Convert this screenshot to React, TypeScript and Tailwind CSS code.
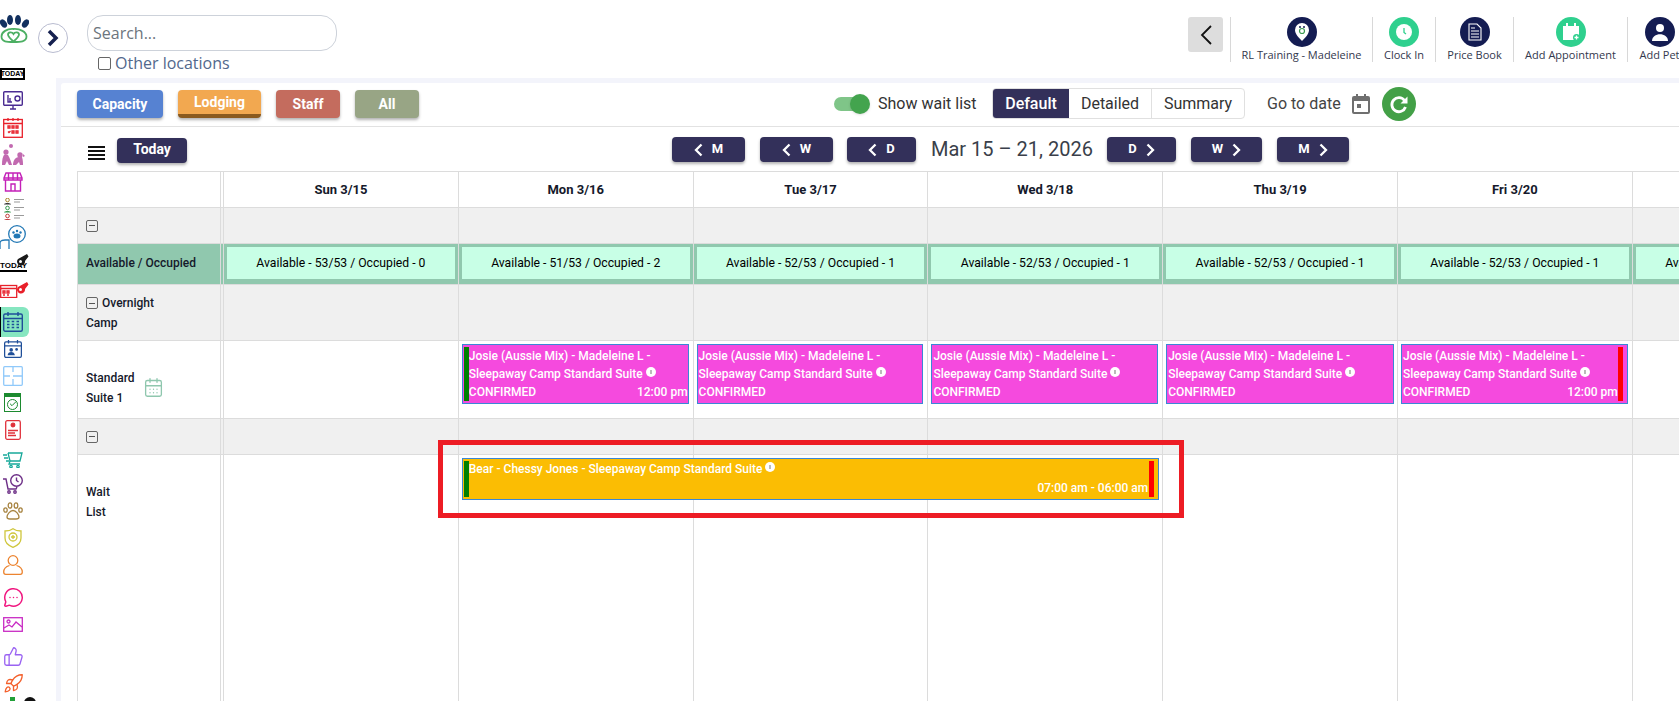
import React from "react";
import { CalendarDays, Check, MessageCircleMore, Rocket, ThumbsUp } from "lucide-react";

const ROW = "grid grid-cols-[146px_repeat(7,234.8px)] border-b border-[#dcdcdc]";
const days = ["Sun 3/15", "Mon 3/16", "Tue 3/17", "Wed 3/18", "Thu 3/19", "Fri 3/20", "Sat 3/21"];
const avail = [
  "Available - 53/53 / Occupied - 0",
  "Available - 51/53 / Occupied - 2",
  "Available - 52/53 / Occupied - 1",
  "Available - 52/53 / Occupied - 1",
  "Available - 52/53 / Occupied - 1",
  "Available - 52/53 / Occupied - 1",
  "Available - 52/53 / Occupied - 1",
];

const Logo = () => (
  <svg viewBox="0 0 29 28" className="h-[28px] w-[29px]">
    <ellipse cx="3.500" cy="8.500" rx="3" ry="4.500" fill="#12305f" transform="rotate(-35 3.500 8.500)" />
    <ellipse cx="10" cy="5" rx="3" ry="5" fill="#12305f" />
    <ellipse cx="18" cy="5" rx="3" ry="5" fill="#12305f" />
    <ellipse cx="25.500" cy="8.500" rx="3" ry="4.500" fill="#12305f" transform="rotate(35 25.500 8.500)" />
    <path
      d="M13.500 27C7 27 1.500 27 1.500 21.500 1.500 17 7 13.500 13.500 14 20 13.500 26.500 17 26.500 21.500 26.500 27 20 27 13.500 27z"
      fill="none"
      stroke="#4caf63"
      strokeWidth="1.800"
    />
    <path
      d="M13.500 26.500C10 23.500 8 21.500 8 19.500c0-2.500 4-3 5.500-.5 1.500-2.500 5.500-2 5.500.5 0 2-2 4-5.500 7z"
      fill="none"
      stroke="#4caf63"
      strokeWidth="1.800"
    />
  </svg>
);

const Monitor = () => (
  <svg viewBox="0 0 20 20" className="h-5 w-5" fill="none" stroke="#4b2c92" strokeWidth="1.400">
    <rect x="0.700" y="0.700" width="18.600" height="13.600" rx="1" />
    <path d="M5 4v7h4M7 7v4M12 7.500a2.500 2.500 0 1 0 5 0 2.500 2.500 0 1 0-5 0M10 14.500v3M7 18h6" />
  </svg>
);

const RedCalendar = () => (
  <svg viewBox="0 0 20 20" className="h-5 w-5" fill="none" stroke="#e8202a" strokeWidth="1.300">
    <rect x="0.700" y="1.500" width="18.600" height="17.800" />
    <path d="M1 5.500h18M5 0v3M10 0v3M15 0v3" />
    <path d="M5 8h2v2H5zM9 8h2v2H9zM13 8h2v2h-2zM9 13h2v2H9zM13 13h2v2h-2zM5 13.500l1 1 1.500-1.500" />
  </svg>
);

const Dogs = () => (
  <svg viewBox="0 0 24 22" className="h-[22px] w-[24px]" fill="#c26ab0">
    <circle cx="10" cy="2" r="2" />
    <circle cx="5" cy="8" r="2.600" />
    <path d="M1 21c0-5 .5-9 3-11l3 1c2 3 3 7 4 10H8l-2-4-2 4z" />
    <circle cx="19" cy="11" r="2.700" />
    <path d="M22 10l2 2-2 1zM12 21c0-4 2-8 6-8h3c1 3 1 6 1 8h-3l-1-3-3 3z" />
  </svg>
);

const Store = () => (
  <svg viewBox="0 0 20 20" className="h-5 w-5" fill="none" stroke="#c421b8" strokeWidth="1.400">
    <path d="M3 1h14l2 5v2H1V6zM1 6h18M5.500 1v7M10 1v7M14.500 1v7M2.500 8v11h15V8M8 19v-7h4v7" />
  </svg>
);

const People = () => (
  <svg viewBox="0 0 22 22" className="h-[22px] w-[22px]">
    {[0, 8, 16].map((y, i) => (
      <g key={y}>
        <circle cx="4.500" cy={y + 2} r="1.800" fill="none" stroke={["#a8862b", "#3d9b53", "#c23d3d"][i]} strokeWidth="1" />
        <path d={`M1 ${y + 6.500}c0-2 7-2 7 0z`} fill={["#3a3a3a", "#3d9b53", "#c23d3d"][i]} />
        <path d={`M11 ${y + 1.500}h10M11 ${y + 4}h6`} stroke="#9a9a9a" strokeWidth="1.200" />
      </g>
    ))}
  </svg>
);

const PawCar = () => (
  <svg viewBox="0 0 26 25" className="h-[25px] w-[26px]" fill="none">
    <circle cx="17" cy="9" r="8.300" stroke="#2278b5" strokeWidth="1.300" />
    <ellipse cx="17" cy="11" rx="3.500" ry="2.500" fill="#2278b5" />
    <circle cx="13.500" cy="7.500" r="1.200" fill="#2278b5" />
    <circle cx="17" cy="6" r="1.200" fill="#2278b5" />
    <circle cx="20.500" cy="7.500" r="1.200" fill="#2278b5" />
    <path d="M0 24v-6c0-2 2-3 5-3h4v9" stroke="#2278b5" strokeWidth="1.300" />
  </svg>
);

const Whistle = ({ color, label }: { color: string; label: boolean }) => (
  <div className="flex h-full w-[29px] items-end overflow-hidden">
    <div className="relative h-full w-full">
      {label ? (
        <span className="absolute bottom-0 left-0 border-b-2 border-black font-['Liberation_Sans',sans-serif] text-[8px] leading-[9px] font-bold text-black">
          TODAY
        </span>
      ) : (
        <svg viewBox="0 0 18 14" className="absolute bottom-0 left-0 h-[14px] w-[18px]" fill="none" stroke={color} strokeWidth="1.300">
          <rect x="0.700" y="1.500" width="16" height="12" />
          <path d="M1 4.500h15M3 7h2v2H3zM7 7h2v2H7zM3 11h2M7 11h2" />
        </svg>
      )}
      <svg viewBox="0 0 14 14" className="absolute top-0 right-0 h-[14px] w-[14px]">
        <path d="M3 6l9-5 1.500 2.500L10 8a4 4 0 1 1-7-2z" fill={color} />
        <circle cx="5.500" cy="8.500" r="1.500" fill="#fff" />
      </svg>
    </div>
  </div>
);

const BlueCalendar = ({ people }: { people?: boolean }) => (
  <svg viewBox="0 0 20 20" className="h-full w-5" fill="none" stroke="#1f4f99" strokeWidth="1.400">
    <rect x="0.700" y="2" width="18.600" height="17.300" rx="1.500" />
    <path d="M1 6.500h18M5 0v4M15 0v4" />
    {people ? (
      <g fill="#1f4f99" stroke="none">
        <circle cx="8" cy="11" r="2" />
        <path d="M4 17c0-5 8-5 8 0z" />
        <circle cx="14" cy="10.500" r="1.500" />
      </g>
    ) : (
      <path d="M4 9.500h2.500M8.700 9.500h2.500M13.500 9.500H16M4 12.500h2.500M8.700 12.500h2.500M13.500 12.500H16M4 15.500h2.500M8.700 15.500h2.500M13.500 15.500H16" strokeWidth="1.600" />
    )}
  </svg>
);

const WindowGrid = () => (
  <svg viewBox="0 0 20 20" className="h-5 w-5" fill="none" stroke="#90c9fa" strokeWidth="1.300">
    <rect x="0.700" y="0.700" width="18.600" height="18.600" rx="1" />
    <path d="M1 10h6M10 10h9M10 1v5M10 13v6" />
  </svg>
);

const GreenCheck = () => (
  <div className="relative flex h-full w-[17px] items-center justify-center border border-[#1c8a2f]">
    <div className="absolute top-0 h-[3px] w-full bg-[#1c8a2f]" />
    <div className="mt-[3px] flex h-[11px] w-[11px] items-center justify-center rounded-full border border-[#1c8a2f]">
      <Check size={8} color="#1c8a2f" strokeWidth={3} />
    </div>
  </div>
);

const RedDoc = () => (
  <svg viewBox="0 0 16 20" className="h-5 w-4" fill="none" stroke="#e0313b" strokeWidth="1.300">
    <rect x="0.700" y="0.700" width="14.600" height="18.600" rx="1.500" />
    <circle cx="8" cy="5" r="1.800" fill="#e0313b" />
    <path d="M3 10.500h10M3 13h7M3 15.500h8" />
  </svg>
);

const Cart = () => (
  <svg viewBox="0 0 20 16" className="h-4 w-5" fill="none" stroke="#18a99a" strokeWidth="1.300">
    <path d="M5 1h14l-2 8H7L5 1M0 3h4M1 6h4M3 9h3M7 9l-1 3h11" />
    <circle cx="8" cy="14.500" r="1.200" />
    <circle cx="15" cy="14.500" r="1.200" />
  </svg>
);

const CartClock = () => (
  <svg viewBox="0 0 20 20" className="h-5 w-5" fill="none" stroke="#6d2f87" strokeWidth="1.400">
    <circle cx="13.500" cy="6.500" r="5.800" />
    <path d="M13.500 3.500v3l2 1.500M0 5h3l2 10h8l1-2" />
    <circle cx="6" cy="18" r="1.200" />
    <circle cx="12" cy="18" r="1.200" />
  </svg>
);

const PawOutline = () => (
  <svg viewBox="0 0 20 18" className="h-[18px] w-5" fill="none" stroke="#a88543" strokeWidth="1.300">
    <ellipse cx="2.500" cy="8" rx="1.700" ry="2.200" />
    <ellipse cx="7" cy="3.500" rx="1.800" ry="2.700" />
    <ellipse cx="13" cy="3.500" rx="1.800" ry="2.700" />
    <ellipse cx="17.500" cy="8" rx="1.700" ry="2.200" />
    <path d="M10 8.500c-3 0-6 4-6 6.500 0 2 2 2 3 2h6c1 0 3 0 3-2 0-2.500-3-6.500-6-6.500z" />
  </svg>
);

const Shield = () => (
  <svg viewBox="0 0 18 20" className="h-5 w-[18px]" fill="none" stroke="#cfc63c" strokeWidth="1.300">
    <path d="M9 .700c2 1.500 5 2.300 8 2.300v7c0 4-3 7.500-8 9.300-5-1.800-8-5.300-8-9.300V3c3 0 6-.8 8-2.300z" />
    <circle cx="9" cy="9" r="4" />
    <path d="M9 7v4M7 9h4" />
  </svg>
);

const Person = () => (
  <svg viewBox="0 0 20 20" className="h-5 w-5" fill="none" stroke="#ec8430" strokeWidth="1.300">
    <circle cx="10" cy="5.500" r="4.800" />
    <path d="M6.500 10.500C3 11.500.7 13.500.7 17c0 1.500 1 2.300 2 2.300h14.600c1 0 2-.8 2-2.300 0-3.500-2.300-5.500-5.800-6.500" />
  </svg>
);

const Picture = () => (
  <svg viewBox="0 0 20 15" className="h-[15px] w-5" fill="none" stroke="#c92cc4" strokeWidth="1.300">
    <rect x="0.700" y="0.700" width="18.600" height="13.600" />
    <circle cx="5.500" cy="4.500" r="1.500" />
    <path d="M1 11l5-3 3 2 4-5 6 5" />
  </svg>
);

const Slot = ({ className, children }: { className: string; children?: React.ReactNode }) => (
  <div className={`flex items-center pl-[3px] ${className}`}>{children}</div>
);

const Sidebar = () => (
  <div className="h-[701px] w-[38px] shrink-0 overflow-hidden pt-[15px]">
    <div className="h-[28px]">
      <Logo />
    </div>
    <div className="mt-[25px] flex h-[12px] w-[25px] items-center justify-center border-2 border-black font-['Liberation_Sans',sans-serif] text-[7px] font-bold text-black">
      TODAY
    </div>
    <Slot className="mt-[11px] h-[20px]"><Monitor /></Slot>
    <Slot className="mt-[7px] h-[20px]"><RedCalendar /></Slot>
    <div className="mt-[6px] h-[22px] pl-[1px]"><Dogs /></div>
    <Slot className="mt-[6px] h-[20px]"><Store /></Slot>
    <Slot className="mt-[6px] h-[22px]"><People /></Slot>
    <div className="mt-[5px] h-[25px]"><PawCar /></div>
    <div className="mt-[3px] h-[19px]"><Whistle color="#1a1a1a" label /></div>
    <div className="mt-[9px] h-[17px]"><Whistle color="#e8202a" label={false} /></div>
    <div className="mt-[9px] flex h-[30px] w-[29px] items-center rounded-r-[6px] border-l border-black bg-[#86e6c0] pl-[2px]">
      <div className="h-[20px] w-[20px]"><BlueCalendar /></div>
    </div>
    <Slot className="mt-[3px] h-[18px]"><BlueCalendar people /></Slot>
    <Slot className="mt-[8px] h-[20px]"><WindowGrid /></Slot>
    <div className="mt-[7px] ml-[4px] h-[19px]"><GreenCheck /></div>
    <div className="mt-[8px] ml-[5px] h-[20px]"><RedDoc /></div>
    <Slot className="mt-[10px] h-[20px]"><Cart /></Slot>
    <Slot className="mt-[4px] h-[20px]"><CartClock /></Slot>
    <Slot className="mt-[8px] h-[18px]"><PawOutline /></Slot>
    <div className="mt-[8px] ml-[4px] h-[20px]"><Shield /></div>
    <Slot className="mt-[7px] h-[20px]"><Person /></Slot>
    <Slot className="mt-[12px] h-[20px]"><MessageCircleMore size={21} color="#f0167f" strokeWidth={1.700} /></Slot>
    <Slot className="mt-[10px] h-[14px]"><Picture /></Slot>
    <Slot className="mt-[15px] h-[20px]"><ThumbsUp size={21} color="#9a63f2" strokeWidth={1.500} /></Slot>
    <Slot className="mt-[7px] h-[20px]"><Rocket size={21} color="#f4602c" strokeWidth={1.500} /></Slot>
    <div className="mt-[4px] flex items-start pl-[10px]">
      <div className="h-[4px] w-[5px] bg-[#21a038]" />
      <div className="ml-[9px] h-[12px] w-[12px] rounded-full bg-[#111]" />
    </div>
  </div>
);

const TopAction = ({ label, width, icon, tone }: { label: string; width: string; icon: React.ReactNode; tone: string }) => (
  <div className={`flex h-[45px] shrink-0 flex-col items-center border-l border-[#d8d8d8] ${width}`}>
    <div className={`flex h-[30px] w-[30px] shrink-0 items-center justify-center rounded-full ${tone}`}>{icon}</div>
    <span className="text-[11px] leading-[15px] whitespace-nowrap text-[#33384d]">{label}</span>
  </div>
);

const TopBar = () => (
  <div className="flex h-[78px] font-['Open_Sans',sans-serif]">
    <div className="mt-[23px] flex h-[30px] w-[30px] shrink-0 items-center justify-center rounded-full border border-[#b9bcd0] bg-white">
      <svg viewBox="0 0 14 18" className="h-[18px] w-[14px]" fill="none" stroke="#15204f" strokeWidth="3.500">
        <path d="M3 2l7 7-7 7" />
      </svg>
    </div>
    <div className="ml-[19px] w-[250px] shrink-0 pt-[15px]">
      <div className="flex h-[36px] items-center rounded-[16px] border border-[#cdd2da] pl-[5px] text-[16px] text-[#6c757d]">Search...</div>
      <div className="mt-[2px] flex items-center pl-[11px] text-[16px] leading-[20px] text-[#52688c]">
        <span className="h-[13px] w-[13px] rounded-[2px] border border-[#666] bg-white" />
        <span className="ml-[4px]">Other locations</span>
      </div>
    </div>
    <div className="ml-[851px] flex pt-[17px]">
      <div className="flex h-[35px] w-[35px] items-center justify-center rounded-[3px] bg-[#dddddd]">
        <svg viewBox="0 0 14 22" className="h-[22px] w-[14px]" fill="none" stroke="#111" strokeWidth="1.800">
          <path d="M12 2L3 11l9 9" />
        </svg>
      </div>
      <div className="ml-[7px] flex">
        <TopAction
          label="RL Training - Madeleine"
          width="w-[142px]"
          tone="bg-[#141c52]"
          icon={
            <svg viewBox="0 0 14 18" className="h-[18px] w-[14px]">
              <path d="M7 0a7 7 0 0 1 7 7c0 4-4 8-7 11-3-3-7-7-7-11a7 7 0 0 1 7-7z" fill="#fff" />
              <circle cx="7" cy="8" r="2.500" fill="none" stroke="#3d9b53" strokeWidth="1.200" />
              <circle cx="5" cy="4" r="1" fill="#141c52" />
              <circle cx="9" cy="4" r="1" fill="#141c52" />
            </svg>
          }
        />
        <TopAction
          label="Clock In"
          width="w-[63px]"
          tone="bg-[#2fd08e]"
          icon={
            <svg viewBox="0 0 16 16" className="h-[16px] w-[16px]">
              <circle cx="8" cy="8" r="8" fill="#fff" />
              <path d="M8 4v4.500l2 1.500" fill="none" stroke="#2fd08e" strokeWidth="1.300" />
            </svg>
          }
        />
        <TopAction
          label="Price Book"
          width="w-[78px]"
          tone="bg-[#141c52]"
          icon={
            <svg viewBox="0 0 14 18" className="h-[18px] w-[14px]" fill="none" stroke="#fff" strokeWidth="1.100">
              <path d="M1 1h8l4 4v12H1zM3 5h4M3 8h8M3 11h8M3 14h8" />
            </svg>
          }
        />
        <TopAction
          label="Add Appointment"
          width="w-[114px]"
          tone="bg-[#2fd08e]"
          icon={
            <svg viewBox="0 0 18 18" className="h-[18px] w-[18px]">
              <path d="M1 3h16v10l-4 4H1z" fill="#fff" />
              <path d="M5 0v4M13 0v4" stroke="#fff" strokeWidth="2" />
              <circle cx="14.500" cy="14.500" r="3.500" fill="#2fd08e" />
              <path d="M14.500 12.500v4M12.500 14.500h4" stroke="#fff" strokeWidth="1.300" />
            </svg>
          }
        />
        <TopAction
          label="Add Pet"
          width="w-[64px]"
          tone="bg-[#141c52]"
          icon={
            <svg viewBox="0 0 18 18" className="h-[18px] w-[18px]" fill="#fff">
              <circle cx="9" cy="5" r="4" />
              <path d="M1 18c0-9 16-9 16 0z" />
            </svg>
          }
        />
      </div>
    </div>
  </div>
);

const NavButton = ({ className, children }: { className: string; children: React.ReactNode }) => (
  <div className={`flex h-[25px] items-center justify-center rounded-[4px] bg-[#33305a] pb-[2px] text-[13px] font-bold text-white shadow-[0_2px_3px_rgba(0,0,0,0.3)] ${className}`}>
    {children}
  </div>
);

const Chev = ({ left }: { left?: boolean }) => (
  <svg viewBox="0 0 9 14" className="mt-[3px] h-[14px] w-[9px]" fill="none" stroke="#fff" strokeWidth="2.300">
    <path d={left ? "M7.500 1.500L2 7l5.500 5.500" : "M1.500 1.500L7 7l-5.500 5.500"} />
  </svg>
);

const FilterButton = ({ label, className }: { label: string; className: string }) => (
  <div className={`flex h-[28px] items-center justify-center rounded-[4px] text-[14px] font-bold text-white shadow-[0_2px_3px_rgba(0,0,0,0.3)] ${className}`}>
    {label}
  </div>
);

const Toolbar = () => (
  <div className="flex h-[44px] items-start border-b border-[#e2e2e2] pl-[16px]">
    <FilterButton label="Capacity" className="mt-[7px] w-[86px] bg-[#5682d2]" />
    <FilterButton label="Lodging" className="mt-[7px] ml-[15px] w-[83px] border-b-[4px] border-[#8a5a1f] bg-[#f2a850]" />
    <FilterButton label="Staff" className="mt-[7px] ml-[15px] w-[64px] bg-[#c46c5e]" />
    <FilterButton label="All" className="mt-[7px] ml-[15px] w-[64px] bg-[#98a585]" />
    <div className="relative mt-[11px] ml-[415px] h-[20px] w-[36px]">
      <div className="absolute top-[3px] left-0 h-[14px] w-[34px] rounded-full bg-[#7fc588]" />
      <div className="absolute top-0 right-0 h-[20px] w-[20px] rounded-full bg-[#43a44e] shadow" />
    </div>
    <span className="mt-[11px] ml-[8px] w-[114px] text-[16px] leading-[20px] text-[#333]">Show wait list</span>
    <div className="mt-[5px] flex h-[31px] w-[253px] rounded-[4px] border border-[#e0e0e0] text-[16px] text-[#333]">
      <div className="flex w-[76px] items-center justify-center rounded-l-[3px] bg-[#33305a] font-medium text-white">Default</div>
      <div className="flex w-[83px] items-center justify-center border-r border-[#e0e0e0]">Detailed</div>
      <div className="flex flex-1 items-center justify-center">Summary</div>
    </div>
    <span className="mt-[11px] ml-[22px] w-[85px] text-[16px] leading-[20px] text-[#444]">Go to date</span>
    <svg viewBox="0 0 18 20" className="mt-[11px] h-[20px] w-[18px]" fill="#6f6f6f">
      <path d="M4 0h2v2h6V0h2v2h2a2 2 0 0 1 2 2v14a2 2 0 0 1-2 2H2a2 2 0 0 1-2-2V4a2 2 0 0 1 2-2h2zM2 7v11h14V7zM5 10h4v4H5z" />
    </svg>
    <div className="mt-[4px] ml-[12px] flex h-[34px] w-[34px] items-center justify-center rounded-full bg-[#43a047]">
      <svg viewBox="0 0 20 20" className="h-[20px] w-[20px]" fill="none">
        <path d="M15.500 6.500A7 7 0 1 0 16.500 13" stroke="#fff" strokeWidth="2.800" />
        <path d="M18.500 2.500v7h-7z" fill="#fff" />
      </svg>
    </div>
  </div>
);

const NavRow = () => (
  <div className="flex h-[44px] items-start pl-[27px]">
    <div className="mt-[19px] flex h-[14px] w-[17px] flex-col justify-between">
      <div className="h-[2px] bg-[#111]" />
      <div className="h-[2px] bg-[#111]" />
      <div className="h-[2px] bg-[#111]" />
      <div className="h-[2px] bg-[#111]" />
    </div>
    <NavButton className="mt-[11px] ml-[12px] w-[70px] text-[14px]">Today</NavButton>
    <NavButton className="mt-[10px] ml-[485px] w-[73px] gap-[9px]"><Chev left /> M</NavButton>
    <NavButton className="mt-[10px] ml-[15px] w-[73px] gap-[9px]"><Chev left /> W</NavButton>
    <NavButton className="mt-[10px] ml-[14px] w-[69px] gap-[9px]"><Chev left /> D</NavButton>
    <span className="mt-[7px] ml-[15px] w-[176px] text-[20px] leading-[30px] whitespace-nowrap text-[#3a3f4a]">Mar 15 – 21, 2026</span>
    <NavButton className="mt-[10px] w-[69px] gap-[9px]">D <Chev /></NavButton>
    <NavButton className="mt-[10px] ml-[15px] w-[71px] gap-[9px]">W <Chev /></NavButton>
    <NavButton className="mt-[10px] ml-[15px] w-[72px] gap-[9px]">M <Chev /></NavButton>
  </div>
);

const Minus = () => (
  <span className="inline-flex h-[12px] w-[12px] shrink-0 items-center justify-center rounded-[2px] border border-[#666]">
    <span className="h-px w-[6px] bg-[#555]" />
  </span>
);

const Label = ({ className, children }: { className?: string; children?: React.ReactNode }) => (
  <div className={`mr-[2px] border-x border-[#dcdcdc] text-[12px] font-medium ${className ?? ""}`}>{children}</div>
);

const InfoDot = () => (
  <span className="relative -top-[3px] ml-[3px] inline-flex h-[10px] w-[10px] items-center justify-center rounded-full bg-white align-middle">
    <span className="h-[4px] w-[2px] bg-[#bbb]" />
  </span>
);

const JosieEvent = ({ time, green, red }: { time?: boolean; green?: boolean; red?: boolean }) => (
  <div className={`relative mt-[3px] h-[60px] border border-[#3a87d6] bg-[#f54ade] text-[12px] leading-[18px] font-medium text-white ${green ? "pl-[6px]" : "pl-[1px]"}`}>
    {green && <div className="absolute top-[2px] bottom-[2px] left-[1px] w-[5px] bg-[#008000]" />}
    {red && <div className="absolute top-[2px] right-[4px] bottom-[2px] w-[5px] bg-[#ff0000]" />}
    <div className="mt-[2px]">Josie (Aussie Mix) - Madeleine L -</div>
    <div className="whitespace-nowrap">Sleepaway Camp Standard Suite<InfoDot /></div>
    <div className={`flex justify-between ${red ? "pr-[9px]" : "pr-0"}`}>
      <span>CONFIRMED</span>
      {time && <span>12:00 pm</span>}
    </div>
  </div>
);

const Cells = () => (
  <>
    {days.map((d) => (
      <div key={d} className="border-l border-[#dcdcdc]" />
    ))}
  </>
);

const Schedule = () => (
  <div className="ml-[16px] w-[1650px] border-t border-[#dcdcdc] font-['Roboto',sans-serif] text-[#15192b]">
    <div className={`${ROW} h-[36px]`}>
      <Label />
      {days.map((d) => (
        <div key={d} className="flex items-center justify-center border-l border-[#dcdcdc] text-[13px] font-bold">{d}</div>
      ))}
    </div>
    <div className={`${ROW} h-[36px] bg-[#f0f0f0]`}>
      <Label className="flex items-center pl-[8px]"><Minus /></Label>
      <Cells />
    </div>
    <div className={`${ROW} h-[41px] bg-[#90c8ae]`}>
      <Label className="pt-[9px] pl-[8px] text-[12.500px] leading-[20px]">Available / Occupied</Label>
      {avail.map((a, i) => (
        <div key={i} className="border-l border-[#dcdcdc] pt-[3px] pr-[3px] pb-[5px] pl-[3px]">
          <div className="flex h-full items-center justify-center bg-[#c8ffe6] text-[12.200px] text-black">{a}</div>
        </div>
      ))}
    </div>
    <div className={`${ROW} h-[56px] bg-[#f0f0f0]`}>
      <Label className="pt-[8px] pl-[8px] leading-[20px]">
        <div className="flex items-center gap-[4px]"><Minus /> Overnight</div>
        <div>Camp</div>
      </Label>
      <Cells />
    </div>
    <div className={`${ROW} h-[78px]`}>
      <Label className="flex items-center pt-[16px] pl-[8px] leading-[20px]">
        <div className="w-[57px]">Standard Suite 1</div>
        <CalendarDays size={21} color="#8fc7ae" strokeWidth={1.500} />
      </Label>
      <div className="border-l border-[#dcdcdc]" />
      <div className="border-l border-[#dcdcdc] pr-[4px] pl-[3px]"><JosieEvent green time /></div>
      <div className="border-l border-[#dcdcdc] pr-[4px] pl-[3px]"><JosieEvent /></div>
      <div className="border-l border-[#dcdcdc] pr-[4px] pl-[3px]"><JosieEvent /></div>
      <div className="border-l border-[#dcdcdc] pr-[3px] pl-[3px]"><JosieEvent /></div>
      <div className="border-l border-[#dcdcdc] pr-[4px] pl-[3px]"><JosieEvent red time /></div>
      <div className="border-l border-[#dcdcdc]" />
    </div>
    <div className={`${ROW} h-[36px] bg-[#f0f0f0]`}>
      <Label className="flex items-center pl-[8px]"><Minus /></Label>
      <Cells />
    </div>
    <div className="grid h-[246px] grid-cols-[146px_repeat(7,234.8px)]">
      <Label className="row-start-1 pt-[27px] pl-[8px] leading-[20px]">
        <div>Wait</div>
        <div>List</div>
      </Label>
      {days.map((d, i) => (
        <div
          key={d}
          className={`row-start-1 border-l border-[#dcdcdc] ${
            ["col-start-2", "col-start-3", "col-start-4", "col-start-5", "col-start-6", "col-start-7", "col-start-8"][i]
          }`}
        />
      ))}
      <div className="col-span-3 col-start-3 row-start-1 pt-[3px] pr-[3px] pl-[4px]">
        <div className="relative h-[42px] border border-[#3a87d6] bg-[#fbbd03] pr-[10px] pl-[6px] text-[12px] leading-[18px] font-medium text-white">
          <div className="absolute top-[2px] bottom-[2px] left-[1px] w-[5px] bg-[#008000]" />
          <div className="absolute top-[2px] right-[4px] bottom-[2px] w-[5px] bg-[#ff0000]" />
          <div className="mt-[1px] whitespace-nowrap">Bear - Chessy Jones - Sleepaway Camp Standard Suite<InfoDot /></div>
          <div className="mt-[1px] text-right">07:00 am - 06:00 am</div>
        </div>
      </div>
    </div>
  </div>
);

export default function App() {
  return (
    <div className="relative flex h-[701px] w-[1679px] overflow-hidden bg-white font-['Roboto',sans-serif]">
      <Sidebar />
      <div className="min-w-0 flex-1">
        <TopBar />
        <div className="ml-[18px] h-[623px] bg-[#f3f4fb] pt-[5px] pl-[5px]">
          <div className="h-full rounded-tl-[3px] bg-white">
            <Toolbar />
            <NavRow />
            <Schedule />
          </div>
        </div>
      </div>
      {/* red highlight drawn over the wait list row */}
      <div className="pointer-events-none absolute top-[440px] left-[438px] h-[78px] w-[746px] border-[5px] border-[#ed1c24]" />
    </div>
  );
}
